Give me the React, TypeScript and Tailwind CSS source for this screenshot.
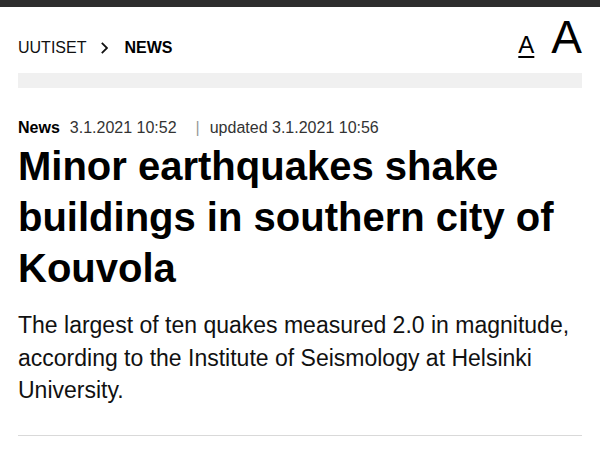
export default function App() {
  return (
    <div className="min-h-[453px] bg-white font-['Liberation_Sans',Arial,sans-serif] text-black">
      <div className="h-[7px] bg-[#2e2e2e]" />
      <div className="px-[18px]">
        <div className="flex items-baseline justify-between pt-[7px] pb-[13px]">
          <nav className="flex items-baseline text-[16px] leading-none">
            <span className="text-[#111]">UUTISET</span>
            <svg
              className="ml-[15px] mr-[16px] h-[12px] w-[7px] self-center"
              viewBox="0 0 7 12"
              fill="none"
              stroke="#111"
              strokeWidth="1.8"
            >
              <path d="M0.8 0.8 L6 6 L0.8 11.2" />
            </svg>
            <span className="font-bold">NEWS</span>
          </nav>
          <div className="flex items-baseline gap-[17px]">
            <span className="text-[24px] leading-none underline decoration-[2px] underline-offset-[3px]">
              A
            </span>
            <span className="text-[46px] leading-none">A</span>
          </div>
        </div>
        <div className="h-[15px] bg-[#f0f0f0]" />
        <div className="mt-[32px] flex items-center text-[16px] leading-none">
          <span className="font-bold">News</span>
          <span className="ml-[10px] text-[#333]">3.1.2021 10:52</span>
          <span className="ml-[19px] mr-[10px] text-[#999]">|</span>
          <span className="text-[#333]">updated 3.1.2021 10:56</span>
        </div>
        <h1 className="mt-[5px] text-[40px] font-bold leading-[51px]">
          Minor earthquakes shake buildings in southern city of Kouvola
        </h1>
        <p className="mt-[15px] text-[23px] leading-[32.5px] text-[#111]">
          The largest of ten quakes measured 2.0 in magnitude, according to the
          Institute of Seismology at Helsinki University.
        </p>
        <div className="mt-[28px] h-px bg-[#d9d9d9]" />
      </div>
    </div>
  )
}
